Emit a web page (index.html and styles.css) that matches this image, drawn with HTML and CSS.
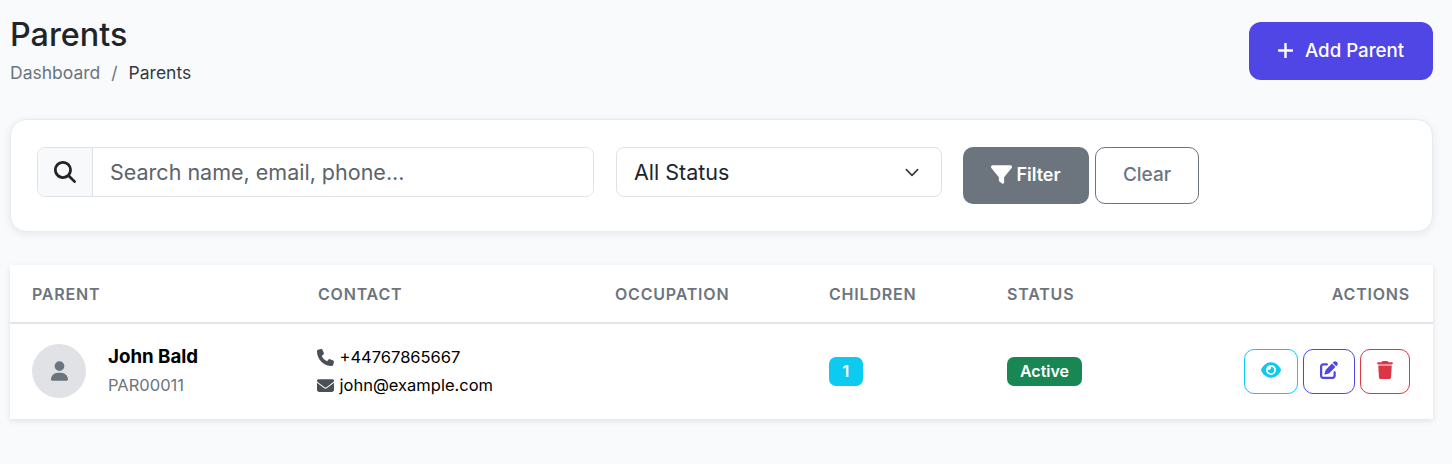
FILE: index.html
```html
<!DOCTYPE html>
<html lang="en">
<head>
    <meta charset="UTF-8">
    <title>Parents</title>
    <link rel="stylesheet" href="styles.css">
</head>
<body>
    <header class="page-header">
        <div>
            <h1>Parents</h1>
            <nav class="breadcrumb">
                <a href="#">Dashboard</a>
                <span class="sep">/</span>
                <span class="current">Parents</span>
            </nav>
        </div>
        <button class="btn-add">
            <svg class="plus" viewBox="0 0 16 16"><path d="M8 1v14M1 8h14" /></svg>
            Add Parent
        </button>
    </header>

    <section class="card filter-card">
        <div class="search-group">
            <span class="search-icon">
                <svg viewBox="0 0 512 512"><path d="M416 208c0 45.9-14.9 88.3-40 122.7L502.6 457.4c12.5 12.5 12.5 32.8 0 45.3s-32.8 12.5-45.3 0L330.7 376c-34.4 25.2-76.8 40-122.7 40C93.1 416 0 322.9 0 208S93.1 0 208 0S416 93.1 416 208zM208 352a144 144 0 1 0 0-288 144 144 0 1 0 0 288z" /></svg>
            </span>
            <input type="text" placeholder="Search name, email, phone...">
        </div>
        <select class="status-select">
            <option>All Status</option>
            <option>Active</option>
            <option>Inactive</option>
        </select>
        <button class="btn-filter">
            <svg viewBox="0 0 512 512"><path d="M3.9 54.9C10.5 40.9 24.5 32 40 32H472c15.5 0 29.5 8.9 36.1 22.9s4.6 30.5-5.2 42.5L320 320.9V448c0 12.1-6.8 23.2-17.7 28.6s-23.8 4.3-33.5-3l-64-48c-8.1-6-12.8-15.5-12.8-25.6V320.9L9 97.3C-.7 85.4-2.8 68.8 3.9 54.9z" /></svg>
            Filter
        </button>
        <button class="btn-clear">Clear</button>
    </section>

    <section class="card table-card">
        <table>
            <thead>
                <tr>
                    <th class="col-parent">Parent</th>
                    <th class="col-contact">Contact</th>
                    <th class="col-occupation">Occupation</th>
                    <th class="col-children">Children</th>
                    <th class="col-status">Status</th>
                    <th class="col-actions">Actions</th>
                </tr>
            </thead>
            <tbody>
                <tr>
                    <td>
                        <div class="parent-cell">
                            <span class="avatar">
                                <svg viewBox="0 0 448 512"><path d="M224 256A128 128 0 1 0 224 0a128 128 0 1 0 0 256zm-45.7 48C79.8 304 0 383.8 0 482.3C0 498.7 13.3 512 29.7 512H418.3c16.4 0 29.7-13.3 29.7-29.7C448 383.8 368.2 304 269.7 304H178.3z" /></svg>
                            </span>
                            <div>
                                <div class="parent-name">John Bald</div>
                                <div class="parent-id">PAR00011</div>
                            </div>
                        </div>
                    </td>
                    <td>
                        <div class="contact-line">
                            <svg viewBox="0 0 512 512"><path d="M164.9 24.6c-7.7-18.6-28-28.5-47.4-23.2l-88 24C12.1 30.2 0 46 0 64C0 311.4 200.6 512 448 512c18 0 33.8-12.1 38.6-29.5l24-88c5.3-19.4-4.6-39.7-23.2-47.4l-96-40c-16.3-6.8-35.2-2.1-46.3 11.6L304.7 368C234.3 334.7 177.3 277.7 144 207.3L193.3 167c13.7-11.2 18.4-30 11.6-46.3l-40-96z" /></svg>
                            +44767865667
                        </div>
                        <div class="contact-line">
                            <svg viewBox="0 0 512 512"><path d="M48 64C21.5 64 0 85.5 0 112c0 15.1 7.1 29.3 19.2 38.4L236.8 313.6c11.4 8.5 27 8.5 38.4 0L492.8 150.4c12.1-9.1 19.2-23.3 19.2-38.4c0-26.5-21.5-48-48-48H48zM0 176V384c0 35.3 28.7 64 64 64H448c35.3 0 64-28.7 64-64V176L294.4 339.2c-22.8 17.1-54 17.1-76.8 0L0 176z" /></svg>
                            john@example.com
                        </div>
                    </td>
                    <td></td>
                    <td><span class="badge badge-count">1</span></td>
                    <td><span class="badge badge-active">Active</span></td>
                    <td class="col-actions">
                        <div class="actions">
                            <button class="act act-view">
                                <svg viewBox="0 0 576 512"><path d="M288 32c-80.8 0-145.5 36.8-192.6 80.6C48.6 156 17.3 208 2.5 243.7c-3.3 7.9-3.3 16.7 0 24.6C17.3 304 48.6 356 95.4 399.4C142.5 443.2 207.2 480 288 480s145.5-36.8 192.6-80.6c46.8-43.5 78.1-95.4 93-131.1c3.3-7.9 3.3-16.7 0-24.6c-14.9-35.7-46.2-87.7-93-131.1C433.5 68.8 368.8 32 288 32zM144 256a144 144 0 1 1 288 0 144 144 0 1 1 -288 0zm144-64c0 35.3-28.7 64-64 64c-7.1 0-13.9-1.2-20.3-3.3c-5.5-1.8-11.9 1.6-11.7 7.4c.3 6.9 1.3 13.8 3.2 20.7c13.7 51.2 66.4 81.6 117.6 67.9s81.6-66.4 67.9-117.6c-11.1-41.5-47.8-69.4-88.6-71.1c-5.8-.2-9.2 6.1-7.4 11.7c2.1 6.4 3.3 13.2 3.3 20.3z" /></svg>
                            </button>
                            <button class="act act-edit">
                                <svg viewBox="0 0 512 512"><path d="M471.6 21.7c-21.9-21.9-57.3-21.9-79.2 0L362.3 51.7l97.9 97.9 30.1-30.1c21.9-21.9 21.9-57.3 0-79.2L471.6 21.7zm-299.2 220c-6.1 6.1-10.8 13.6-13.5 21.9l-29.6 88.8c-2.9 8.6-.6 18.1 5.8 24.6s15.9 8.7 24.6 5.8l88.8-29.6c8.2-2.7 15.7-7.4 21.9-13.5L437.7 172.3 339.7 74.3 172.4 241.7zM96 64C43 64 0 107 0 160V416c0 53 43 96 96 96H352c53 0 96-43 96-96V320c0-17.7-14.3-32-32-32s-32 14.3-32 32v96c0 17.7-14.3 32-32 32H96c-17.7 0-32-14.3-32-32V160c0-17.7 14.3-32 32-32h96c17.7 0 32-14.3 32-32s-14.3-32-32-32H96z" /></svg>
                            </button>
                            <button class="act act-delete">
                                <svg viewBox="0 0 448 512"><path d="M135.2 17.7L128 32H32C14.3 32 0 46.3 0 64S14.3 96 32 96H416c17.7 0 32-14.3 32-32s-14.3-32-32-32H320l-7.2-14.3C307.4 6.8 296.3 0 284.2 0H163.8c-12.1 0-23.2 6.8-28.6 17.7zM416 128H32L53.2 467c1.6 25.3 22.6 45 47.9 45H346.9c25.3 0 46.3-19.7 47.9-45L416 128z" /></svg>
                            </button>
                        </div>
                    </td>
                </tr>
            </tbody>
        </table>
    </section>
</body>
</html>
```

FILE: styles.css
```css
* {
    margin: 0;
    padding: 0;
    box-sizing: border-box;
    font-family: Inter, sans-serif;
}

body {
    background: #f9fafc;
    color: #212529;
    padding: 16px 19px 30px 10px;
}

svg {
    fill: currentColor;
    display: block;
}

button {
    cursor: pointer;
    font-family: Inter, sans-serif;
}

.page-header {
    display: flex;
    justify-content: space-between;
    align-items: flex-start;
    margin-bottom: 33px;
}

h1 {
    font-size: 32.3px;
    font-weight: 500;
    line-height: 38px;
    margin-bottom: 6px;
}

.breadcrumb {
    display: flex;
    font-size: 17.5px;
    line-height: 26px;
}

.breadcrumb a {
    color: #6c757d;
    text-decoration: none;
}

.breadcrumb .sep {
    color: #6c757d;
    padding: 0 11px;
}

.breadcrumb .current {
    color: #343a40;
}

.btn-add {
    display: flex;
    align-items: center;
    gap: 11px;
    height: 58px;
    width: 184px;
    margin-top: 6px;
    padding: 0 0 2px 28px;
    background: #4f46e5;
    color: #fff;
    border: none;
    border-radius: 12px;
    font-size: 18.7px;
    font-weight: 500;
}

.plus {
    width: 17px;
    height: 17px;
    fill: none;
    stroke: #fff;
    stroke-width: 2.3;
}

.card {
    background: #fff;
    box-shadow: 0 2px 8px rgba(0, 0, 0, 0.08);
}

.filter-card {
    display: flex;
    align-items: flex-start;
    height: 113px;
    padding: 26px;
    border: 1px solid #e9ebef;
    border-radius: 16px;
    margin-bottom: 33px;
}

.search-group {
    display: flex;
    width: 557px;
    height: 50px;
    margin-top: 1px;
    border: 1px solid #dee2e6;
    border-radius: 8px;
    overflow: hidden;
    margin-right: 22px;
}

.search-icon {
    display: flex;
    align-items: center;
    justify-content: center;
    width: 55px;
    background: #f8f9fa;
    border-right: 1px solid #dee2e6;
}

.search-icon svg {
    width: 22px;
    height: 22px;
}

.search-group input {
    flex: 1;
    border: none;
    outline: none;
    padding: 0 17px;
    font-size: 21.5px;
    color: #212529;
}

.search-group input::placeholder {
    color: #5c636a;
    opacity: 1;
}

.status-select {
    appearance: none;
    width: 326px;
    height: 50px;
    margin-top: 1px;
    border: 1px solid #dee2e6;
    border-radius: 8px;
    margin-right: 21px;
    padding: 0 17px;
    font-size: 21.5px;
    color: #212529;
    background: #fff url("data:image/svg+xml,%3csvg xmlns='http://www.w3.org/2000/svg' viewBox='0 0 16 16'%3e%3cpath fill='none' stroke='%23343a40' stroke-linecap='round' stroke-linejoin='round' stroke-width='1.7' d='m2 5 6 6 6-6'/%3e%3c/svg%3e") no-repeat right 19px center / 20px 15px;
}

.btn-filter {
    display: flex;
    align-items: center;
    justify-content: center;
    gap: 4px;
    width: 126px;
    height: 57px;
    margin-top: 1px;
    padding-bottom: 2px;
    background: #6c757d;
    color: #fff;
    border: none;
    border-radius: 10px;
    font-size: 18px;
    font-weight: 600;
    margin-right: 6px;
}

.btn-filter svg {
    width: 21px;
    height: 21px;
}

.btn-clear {
    width: 104px;
    height: 57px;
    margin-top: 1px;
    padding-bottom: 2px;
    background: #fff;
    color: #6c757d;
    border: 1px solid #6c757d;
    border-radius: 10px;
    font-size: 19px;
    font-weight: 500;
}

.table-card {
    box-shadow: 0 2px 6px rgba(0, 0, 0, 0.1);
}

table {
    width: 100%;
    border-collapse: collapse;
    table-layout: fixed;
}

th {
    height: 58px;
    padding: 0 22px;
    border-bottom: 2px solid #e2e4e8;
    color: #6c757d;
    font-size: 16px;
    font-weight: 600;
    letter-spacing: 0.8px;
    text-align: left;
    text-transform: uppercase;
}

td {
    height: 96px;
    padding: 0 22px 1px;
    vertical-align: middle;
    font-size: 16px;
    color: #000;
}

.col-parent { width: 286px; }
.col-contact { width: 297px; }
.col-occupation { width: 214px; }
.col-children { width: 178px; }
.col-status { width: 200px; }

th.col-actions,
td.col-actions {
    padding-right: 23px;
    text-align: right;
}

.parent-cell {
    display: flex;
    align-items: center;
    gap: 22px;
}

.avatar {
    display: flex;
    align-items: center;
    justify-content: center;
    width: 54px;
    height: 54px;
    border-radius: 50%;
    background: #e0e2e5;
    color: #6c757d;
}

.avatar svg {
    width: 17px;
    height: 20px;
}

.parent-name {
    font-size: 18.7px;
    font-weight: 700;
    line-height: 24px;
    margin-bottom: 4px;
}

.parent-id {
    color: #6c757d;
    font-size: 16.5px;
    line-height: 24px;
}

.contact-line {
    display: flex;
    align-items: center;
    gap: 5.5px;
    margin-left: -1px;
    line-height: 28px;
    font-size: 16.5px;
}

.contact-line svg {
    width: 17px;
    height: 17px;
    color: #495057;
}

.badge {
    display: inline-block;
    height: 29px;
    line-height: 29px;
    border-radius: 7px;
    color: #fff;
    font-size: 16px;
    font-weight: 600;
    text-align: center;
}

.badge-count {
    width: 34px;
    background: #0dcaf0;
}

.badge-active {
    width: 75px;
    background: #198754;
}

.actions {
    display: flex;
    justify-content: flex-end;
    gap: 5px;
}

.act {
    display: flex;
    align-items: center;
    justify-content: center;
    height: 45px;
    padding-bottom: 2px;
    background: #fff;
    border-radius: 10px;
    border: 1px solid;
}

.act svg {
    width: 20px;
    height: 18px;
}

.act-view { width: 54px; color: #0dcaf0; }
.act-edit { width: 52px; color: #4f46e5; }
.act-delete { width: 50px; color: #dc3545; }
```
